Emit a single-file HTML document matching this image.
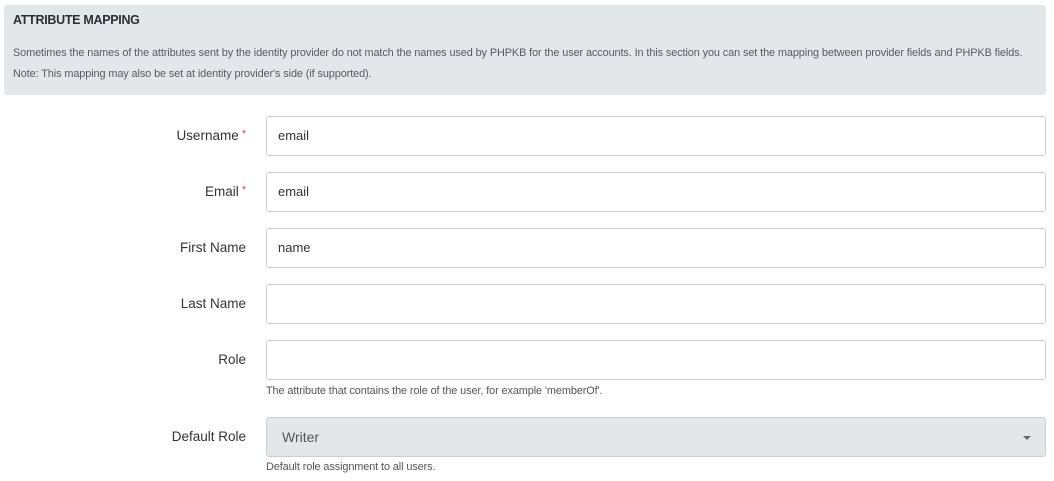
<!DOCTYPE html>
<html><head><style>
body{margin:0;width:1054px;height:481px;background:#fff;font-family:"Liberation Sans",sans-serif;color:#3a3f44;position:relative;overflow:hidden}
.hdr{position:absolute;left:4px;top:5px;width:1042px;height:90px;background:#e4e7ea;border-radius:3px}
.t{position:absolute;left:9px;top:8px;font-size:12.5px;font-weight:bold;color:#2b2f33;letter-spacing:-0.3px}
.d{position:absolute;left:9px;font-size:10.9px;color:#555b61;white-space:nowrap;letter-spacing:-0.1px}
.lbl{position:absolute;right:808px;font-size:13.5px;color:#333;text-align:right;white-space:nowrap}
.lbl span{color:#e04b4b;font-size:11px;vertical-align:top;margin-left:3px}
.in{position:absolute;left:266px;width:778px;height:38px;border:1px solid #ccd0d4;border-radius:3px;font-size:13px;line-height:38px;box-sizing:content-box}
.in b{font-weight:normal;margin-left:11px;color:#333}
.sel{background:#e4e7ea;font-size:14px;color:#555}
.h{position:absolute;left:266px;font-size:10.9px;color:#555;white-space:nowrap;letter-spacing:-0.1px}
.arr{position:absolute;right:14px;top:18px;width:0;height:0;border-left:4px solid transparent;border-right:4px solid transparent;border-top:4px solid #666}
</style></head><body>
<div class="hdr">
<div class="t">ATTRIBUTE MAPPING</div>
<div class="d" style="top:42px">Sometimes the names of the attributes sent by the identity provider do not match the names used by PHPKB for the user accounts. In this section you can set the mapping between provider fields and PHPKB fields.</div>
<div class="d" style="top:63px">Note: This mapping may also be set at identity provider's side (if supported).</div>
</div>
<div class="lbl" style="top:128px">Username<span>*</span></div>
<div class="in" style="top:116px"><b>email</b></div>
<div class="lbl" style="top:184px">Email<span>*</span></div>
<div class="in" style="top:172px"><b>email</b></div>
<div class="lbl" style="top:240px">First Name</div>
<div class="in" style="top:228px"><b>name</b></div>
<div class="lbl" style="top:296px">Last Name</div>
<div class="in" style="top:284px"></div>
<div class="lbl" style="top:352px">Role</div>
<div class="in" style="top:340px"></div>
<div class="h" style="top:385px">The attribute that contains the role of the user, for example 'memberOf'.</div>
<div class="lbl" style="top:429px">Default Role</div>
<div class="in sel" style="top:417px"><b style="margin-left:15px;color:#555">Writer</b><div class="arr"></div></div>
<div class="h" style="top:461px">Default role assignment to all users.</div>
</body></html>
